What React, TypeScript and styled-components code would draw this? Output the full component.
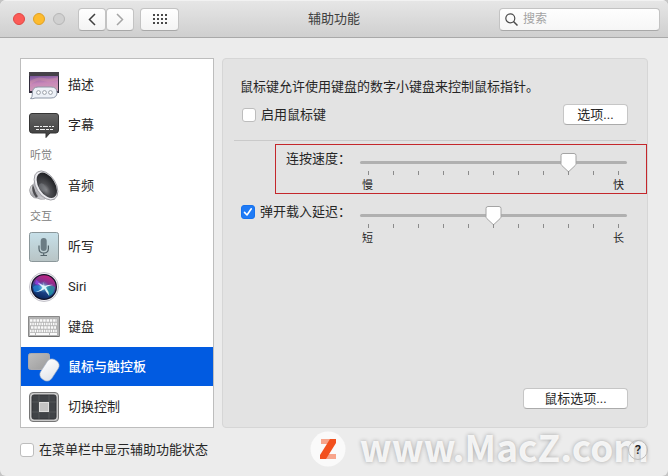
import React, { useState } from "react";
import styled, { createGlobalStyle, css } from "styled-components";

const GlobalStyle = createGlobalStyle`
  *, *::before, *::after { box-sizing: border-box; }
  body {
    margin: 0;
    background: #c4c4c4;
    color: #262626;
    font: 13px/20px Roboto, "Noto Sans CJK SC", sans-serif;
  }
  button, input { font: inherit; color: inherit; }
  svg { display: block; flex: none; }
`;

const Window = styled.div`
  position: relative;
  display: flex;
  flex-direction: column;
  min-height: 100vh;
  border-radius: 6px;
  overflow: hidden;
  background: #ececec;
`;

const TitleBar = styled.header`
  display: grid;
  grid-template-columns: 1fr auto 1fr;
  align-items: center;
  height: 38px;
  padding: 0 8px;
  border-top: 1px solid #f2f2f2;
  border-bottom: 1px solid #a9a9a9;
  background: linear-gradient(#e6e6e6, #cfcfcf);
`;

const Controls = styled.div`
  display: flex;
  align-items: center;
`;

const Lights = styled.div`
  display: flex;
  gap: 8px;
  margin: 0 13px 0 5px;
`;

const Light = styled.button<{ $fill: string; $edge: string }>`
  width: 12px;
  height: 12px;
  padding: 0;
  border: 1px solid ${(p) => p.$edge};
  border-radius: 50%;
  background: ${(p) => p.$fill};
`;

const ToolButton = styled.button<{ $wide?: boolean }>`
  display: flex;
  align-items: center;
  justify-content: center;
  width: ${(p) => (p.$wide ? 39 : 28)}px;
  height: 23px;
  padding: 0;
  border: 1px solid #c3c3c3;
  border-bottom-color: #a8a8a8;
  border-radius: 4px;
  background: linear-gradient(#fefefe, #f4f4f4);
  margin-left: ${(p) => (p.$wide ? 6 : 0)}px;
`;

const Title = styled.h1`
  margin: 0;
  font-size: 13px;
  font-weight: 400;
  color: #404040;
`;

const SearchBox = styled.label`
  justify-self: end;
  display: flex;
  align-items: center;
  gap: 5px;
  width: 161px;
  height: 23px;
  padding: 0 5px;
  border: 1px solid #c3c3c3;
  border-bottom-color: #a8a8a8;
  border-radius: 4px;
  background: linear-gradient(#fefefe, #f6f6f6);
`;

const SearchInput = styled.input`
  flex: 1;
  min-width: 0;
  height: 20px;
  padding: 0;
  border: 0;
  outline: 0;
  background: none;
  font-size: 12px;
  &::placeholder { color: #a3a3a3; opacity: 1; }
`;

const Body = styled.main`
  flex: 1;
  display: grid;
  grid-template-columns: 194px minmax(0, 1fr);
  gap: 8px;
  padding: 20px 20px 0;
`;

const Sidebar = styled.nav`
  padding-top: 6px;
  border: 1px solid #bdbdbd;
  background: #fff;
`;

const SideItem = styled.button<{ $selected?: boolean }>`
  display: flex;
  align-items: center;
  gap: 8px;
  width: 100%;
  height: 39px;
  margin-bottom: 1px;
  padding: 0 7px;
  border: 0;
  background: none;
  text-align: left;
  ${(p) =>
    p.$selected &&
    css`
      background: #015be1;
      color: #fff;
      font-weight: 500;
    `}
`;

const SideHeading = styled.h2`
  height: 21px;
  margin: 0;
  padding-left: 9px;
  font-size: 11px;
  font-weight: 400;
  line-height: 22px;
  color: #808080;
`;

const Panel = styled.section`
  display: flex;
  flex-direction: column;
  border: 1px solid #d6d6d6;
  border-radius: 4px;
  background: #e3e3e3;
`;

const Intro = styled.p`
  margin: 0;
  padding: 18px 17px 0;
`;

const EnableRow = styled.div`
  display: flex;
  align-items: center;
  justify-content: space-between;
  padding: 7px 19px 15px;
`;

const CheckLabel = styled.label`
  display: flex;
  align-items: center;
  gap: 5px;
`;

const Check = styled.input.attrs({ type: "checkbox" })`
  appearance: none;
  flex: none;
  width: 14px;
  height: 14px;
  margin: 0;
  border: 1px solid #bdbdbd;
  border-radius: 3px;
  background: #fff;
  &:checked {
    border-color: #1672ee;
    background: #1f7bf6
      url("data:image/svg+xml,%3Csvg xmlns='http://www.w3.org/2000/svg' viewBox='0 0 12 12'%3E%3Cpath d='M2.5 6.4 5 9 9.3 2.8' fill='none' stroke='white' stroke-width='1.6' stroke-linecap='round' stroke-linejoin='round'/%3E%3C/svg%3E")
      center / 12px 12px no-repeat;
  }
`;

const PushButton = styled.button<{ $wide?: boolean }>`
  width: ${(p) => (p.$wide ? 105 : 65)}px;
  height: 21px;
  padding: 0;
  border: 1px solid #c6c6c6;
  border-bottom-color: #ababab;
  border-radius: 4px;
  background: #fff;
  line-height: 18px;
`;

const Divider = styled.hr`
  width: auto;
  height: 1px;
  margin: 0 11px 3px;
  border: 0;
  background: #cacaca;
`;

const SettingRow = styled.div<{ $marked?: boolean }>`
  display: grid;
  grid-template-columns: auto minmax(0, 1fr);
  column-gap: 9px;
  height: 50px;
  margin-bottom: 3px;
  margin-left: ${(p) => (p.$marked ? 52 : 17)}px;
  padding: 4px 19px 0 ${(p) => (p.$marked ? 10 : 0)}px;
  border: 1px solid ${(p) => (p.$marked ? "#c4272b" : "transparent")};
`;

const SettingLabel = styled.label`
  display: flex;
  align-items: center;
  gap: 5px;
  height: 20px;
`;

const SliderBox = styled.div`
  display: flex;
  flex-direction: column;
  padding-top: 3px;
`;

const thumb = css`
  appearance: none;
  width: 17px;
  height: 20px;
  margin-top: -8px;
  border: 0;
  background: url("data:image/svg+xml,%3Csvg xmlns='http://www.w3.org/2000/svg' viewBox='0 0 17 20'%3E%3Cpath d='M3 .5h11q2 0 2 2v8.2q0 1-.8 1.8L8.5 18.8 1.8 12.500q-.8-.8-.8-1.800V2.500q0-2 2-2Z' fill='white' stroke='%23a4a4a4'/%3E%3C/svg%3E")
    center / 17px 20px no-repeat;
`;

const Range = styled.input.attrs({ type: "range", min: 0, max: 10 })`
  appearance: none;
  display: block;
  width: 100%;
  height: 20px;
  margin: 0;
  background: none;
  &::-webkit-slider-runnable-track {
    height: 3px;
    border-radius: 2px;
    background: #b0b0b0;
  }
  &::-webkit-slider-thumb { ${thumb} }
`;

const Ticks = styled.div`
  display: flex;
  justify-content: space-between;
  height: 4px;
  margin-top: -1px;
  padding: 0 8px;
`;

const Tick = styled.i`
  width: 1px;
  background: #8b8b8b;
`;

const Ends = styled.div`
  display: flex;
  justify-content: space-between;
  padding: 0 3px 0 2px;
  font-size: 11px;
  line-height: 22px;
`;

const PanelFooter = styled.div`
  display: flex;
  justify-content: flex-end;
  margin-top: auto;
  padding: 0 19px 18px;
`;

const Footer = styled.footer`
  display: flex;
  align-items: center;
  justify-content: space-between;
  height: 48px;
  padding: 0 20px 4px;
`;

const HelpButton = styled.button`
  z-index: 1;
  width: 20px;
  height: 20px;
  padding: 0;
  border: 1px solid #bcbcbc;
  border-radius: 50%;
  background: none;
  font-weight: 500;
  line-height: 18px;
`;

const Watermark = styled.div`
  position: absolute;
  right: 19px;
  bottom: 4px;
  display: flex;
  align-items: center;
  gap: 14px;
  pointer-events: none;
  color: rgba(252, 252, 252, 0.9);
  font: 700 37px/40px "Noto Sans CJK SC", sans-serif;
  text-shadow: 0 0 4px rgba(0, 0, 0, 0.3);
`;

const WatermarkText = styled.span`
  padding-bottom: 6px;
`;

const DescriptionIcon = () => (
  <svg width="32" height="32" viewBox="0 0 32 32">
    <defs>
      <linearGradient id="desk" x1="0" y1="0" x2="0.2" y2="1">
        <stop offset="0" stopColor="#76549a" />
        <stop offset="0.55" stopColor="#c887b9" />
        <stop offset="1" stopColor="#cf9bb4" />
      </linearGradient>
    </defs>
    <path d="M1 3h30v21H1z" fill="#302c3b" />
    <path d="M1 3h30v4H1z" fill="#454148" />
    <path d="M2 7h28v15H2z" fill="url(#desk)" />
    <path d="M2 12q8-5 14-3t14-1v3q-9 3-15 1T2 16z" fill="#e7a4a5" opacity=".3" />
    <path d="M10 18h13q6 0 6 5.500T23 29H7q-2 1-4.500.6Q4.500 28 4.300 25 4 18 10 18Z" fill="#edf1f7" stroke="#8e97a6" />
    <g fill="#fff" stroke="#858b95" strokeWidth=".8">
      <circle cx="10.500" cy="23.500" r="1.900" />
      <circle cx="16.500" cy="23.500" r="1.900" />
      <circle cx="22.500" cy="23.500" r="1.900" />
    </g>
  </svg>
);

const CaptionIcon = () => (
  <svg width="32" height="32" viewBox="0 0 32 32">
    <defs>
      <linearGradient id="cap" x1="0" y1="0" x2="0" y2="1">
        <stop offset="0" stopColor="#666" />
        <stop offset="1" stopColor="#3b3b3b" />
      </linearGradient>
    </defs>
    <path d="M4 4.500h24q2.500 0 2.500 2.500v14q0 3-2.500 3h-6l-4 4.500V24H4q-2.500 0-2.500-3V7q0-2.500 2.500-2.500Z" fill="url(#cap)" stroke="#353535" />
    <path d="M6 17.500h20" stroke="#eee" strokeDasharray="5 1 2 1" />
    <path d="M8 20.500h17" stroke="#eee" strokeDasharray="3 1 5 1" />
  </svg>
);

const SpeakerIcon = () => (
  <svg width="32" height="34" viewBox="0 0 32 34">
    <defs>
      <linearGradient id="spk" x1="0" y1="0" x2="1" y2="1">
        <stop offset="0" stopColor="#fafafa" />
        <stop offset="0.5" stopColor="#a1a1a6" />
        <stop offset="1" stopColor="#e6e6ea" />
      </linearGradient>
      <radialGradient id="cone" cx=".3" cy=".6" r=".7">
        <stop offset="0" stopColor="#8d8e92" />
        <stop offset=".35" stopColor="#4d4e52" />
        <stop offset="1" stopColor="#1f2023" />
      </radialGradient>
    </defs>
    <path d="M3 17q3-3 7-2l7 15q-5 1-8-1-3 1-6-3-3-5 0-9Z" fill="url(#spk)" stroke="#929297" strokeWidth=".7" />
    <path d="M6 16q-2 6 3 12" fill="none" stroke="#4c4c50" strokeWidth="2.500" />
    <path d="M9 3 5 16q3 10 12 14l10 1Z" fill="#b8b8bd" />
    <ellipse cx="18" cy="16.500" rx="9.800" ry="16" transform="rotate(-32 18 16.500)" fill="#e9e9ed" stroke="#939398" strokeWidth=".8" />
    <ellipse cx="18.800" cy="16.300" rx="8.200" ry="14" transform="rotate(-32 18.800 16.300)" fill="url(#cone)" />
    <ellipse cx="14.500" cy="18.500" rx="3" ry="4.500" transform="rotate(-32 14.500 18.500)" fill="#77797e" opacity=".65" />
  </svg>
);

const DictationIcon = () => (
  <svg width="32" height="32" viewBox="0 0 32 32">
    <defs>
      <linearGradient id="dict" x1="0" y1="0" x2="0" y2="1">
        <stop offset="0" stopColor="#c7e0e9" />
        <stop offset="1" stopColor="#b8c4c5" />
      </linearGradient>
    </defs>
    <rect x="1.500" y="1.500" width="29" height="29" rx="2" fill="url(#dict)" stroke="#8b979a" />
    <rect x="12.700" y="7" width="6" height="13" rx="3" fill="#6b7c84" />
    <path d="M11 14.500v3q0 4.500 4.700 4.500t4.700-4.500v-3M15.700 22v2.500M12.500 24.500h6.500" fill="none" stroke="#53636a" strokeWidth="1.200" />
  </svg>
);

const SiriIcon = () => (
  <svg width="32" height="32" viewBox="0 0 32 32">
    <defs>
      <linearGradient id="siri" x1=".7" y1="0" x2=".35" y2="1">
        <stop offset="0" stopColor="#c9217f" />
        <stop offset=".38" stopColor="#793393" />
        <stop offset=".6" stopColor="#234c96" />
        <stop offset="1" stopColor="#08265a" />
      </linearGradient>
      <radialGradient id="glow">
        <stop offset="0" stopColor="#fff" />
        <stop offset=".35" stopColor="#8ff0f2" stopOpacity=".6" />
        <stop offset="1" stopColor="#3bd" stopOpacity="0" />
      </radialGradient>
    </defs>
    <circle cx="16" cy="16" r="14.500" fill="#f2f1f5" stroke="#b5b4bc" strokeWidth=".8" />
    <circle cx="16" cy="16" r="13" fill="#111126" />
    <circle cx="16" cy="16" r="11.800" fill="url(#siri)" />
    <path d="M5 16q4-4 11 0-7 8-10 4Z" fill="#2688d9" opacity=".7" />
    <path d="M16 16q7-3 11 0-1 7-6 9Z" fill="#23a4a6" opacity=".7" />
    <path d="M16 16Q10 9 8 9l-1 4Z" fill="#8b3dd6" />
    <circle cx="15.500" cy="16" r="6" fill="url(#glow)" opacity=".8" />
    <path d="M16.500 6q-1 7 0 9Q22 13 26 14q-6 .5-8 2.500 3 4 3 8-3-3-4.500-6.500-5 3.500-8.500 3 5-2 6.500-4.500l-5-5 6 3Z" fill="#e9fcff" opacity=".9" />
  </svg>
);

const keys = [
  [3, "M3 9.500h27"],
  [2, "M3 13h27"],
  [3, "M4 16.500h25"],
  [2, "M3 20h27"],
] as const;

const KeyboardIcon = () => (
  <svg width="34" height="32" viewBox="0 0 34 32">
    <path d="M1.500 5.500h31v20h-31z" fill="#b4b4b4" stroke="#898989" />
    <path d="M2 25.500h30" stroke="#6d6d6d" />
    {keys.map(([dash, d]) => (
      <path key={d} d={d} stroke="#fafafa" strokeWidth="2.300" strokeDasharray={`${dash - 0.5} .8`} />
    ))}
    <path d="M3 23h5M9 23h13M23 23h7" stroke="#fafafa" strokeWidth="1.800" />
  </svg>
);

const MouseIcon = () => (
  <svg width="34" height="34" viewBox="0 0 34 34">
    <defs>
      <linearGradient id="pad" x1="0" y1="0" x2="1" y2="1">
        <stop offset="0" stopColor="#bdbdbd" />
        <stop offset="1" stopColor="#9c9c9c" />
      </linearGradient>
      <linearGradient id="mouse" x1="0" y1="0" x2="1" y2="1">
        <stop offset="0" stopColor="#fff" />
        <stop offset="1" stopColor="#dfe2e7" />
      </linearGradient>
    </defs>
    <rect x="1.500" y="3.500" width="21" height="16" rx="2" fill="url(#pad)" stroke="#aaaaae" />
    <rect x="16" y="8.500" width="13" height="23" rx="5.500" transform="rotate(33 22.500 20)" fill="url(#mouse)" stroke="#a8b4c7" strokeWidth=".6" />
  </svg>
);

const SwitchIcon = () => (
  <svg width="32" height="32" viewBox="0 0 32 32">
    <rect x="1.500" y="1.500" width="29" height="29" rx="3.500" fill="#c9c9c9" stroke="#757575" />
    <rect x="4" y="4" width="24" height="24" rx="2" fill="#404347" stroke="#303236" />
    <path d="M11 4v24M21 4v24M4 11h24M4 21h24" stroke="#606367" strokeWidth=".6" />
    <rect x="11.500" y="11.500" width="9" height="9" fill="#c4c4c4" stroke="#dedede" />
  </svg>
);

const Slot = styled.span`
  display: flex;
  justify-content: center;
  width: 32px;
`;

type Entry = { label: string; icon?: () => React.ReactElement };

const entries: Entry[] = [
  { label: "描述", icon: DescriptionIcon },
  { label: "字幕", icon: CaptionIcon },
  { label: "听觉" },
  { label: "音频", icon: SpeakerIcon },
  { label: "交互" },
  { label: "听写", icon: DictationIcon },
  { label: "Siri", icon: SiriIcon },
  { label: "键盘", icon: KeyboardIcon },
  { label: "鼠标与触控板", icon: MouseIcon },
  { label: "切换控制", icon: SwitchIcon },
];

type SliderProps = { label: string; initial: number; low: string; high: string; id?: string };

function Slider({ id, label, initial, low, high }: SliderProps) {
  const [value, setValue] = useState(initial);
  return (
    <SliderBox>
      <Range id={id} aria-label={label} value={value} onChange={(e) => setValue(Number(e.target.value))} />
      <Ticks>
        {Array.from({ length: 11 }, (_, i) => (
          <Tick key={i} />
        ))}
      </Ticks>
      <Ends>
        <span>{low}</span>
        <span>{high}</span>
      </Ends>
    </SliderBox>
  );
}

export default function App() {
  const [selected, setSelected] = useState("鼠标与触控板");
  return (
    <Window>
      <GlobalStyle />
      <TitleBar>
        <Controls>
          <Lights>
            <Light $fill="#fc5b57" $edge="#df4744" aria-label="关闭" />
            <Light $fill="#fdbb2e" $edge="#dfa023" aria-label="最小化" />
            <Light $fill="#d0d0d0" $edge="#b6b6b6" aria-label="缩放" disabled />
          </Lights>
          <ToolButton aria-label="后退">
            <svg width="8" height="13" viewBox="0 0 8 13">
              <path d="M7 1 1.500 6.500 7 12" fill="none" stroke="#404040" strokeWidth="1.500" />
            </svg>
          </ToolButton>
          <ToolButton aria-label="前进">
            <svg width="8" height="13" viewBox="0 0 8 13">
              <path d="M1 1l5.500 5.500L1 12" fill="none" stroke="#a5a5a5" strokeWidth="1.500" />
            </svg>
          </ToolButton>
          <ToolButton $wide aria-label="显示全部">
            <svg width="14" height="10" viewBox="0 0 14 10" fill="#484848">
              {[0, 4, 8].map((y) => [0, 4, 8, 12].map((x) => <rect key={`${x}-${y}`} x={x} y={y} width="2" height="2" />))}
            </svg>
          </ToolButton>
        </Controls>
        <Title>辅助功能</Title>
        <SearchBox>
          <svg width="13" height="13" viewBox="0 0 13 13">
            <circle cx="5.300" cy="5.300" r="4.500" fill="none" stroke="#4a4a4a" strokeWidth="1.200" />
            <path d="m8.500 8.500 4 4" stroke="#4a4a4a" strokeWidth="1.500" />
          </svg>
          <SearchInput placeholder="搜索" aria-label="搜索" />
        </SearchBox>
      </TitleBar>
      <Body>
        <Sidebar>
          {entries.map(({ label, icon: Icon }) =>
            Icon ? (
              <SideItem key={label} $selected={label === selected} onClick={() => setSelected(label)}>
                <Slot>
                  <Icon />
                </Slot>
                {label}
              </SideItem>
            ) : (
              <SideHeading key={label}>{label}</SideHeading>
            )
          )}
        </Sidebar>
        <Panel>
          <Intro>鼠标键允许使用键盘的数字小键盘来控制鼠标指针。</Intro>
          <EnableRow>
            <CheckLabel>
              <Check />
              启用鼠标键
            </CheckLabel>
            <PushButton>选项...</PushButton>
          </EnableRow>
          <Divider />
          <SettingRow $marked>
            <SettingLabel htmlFor="click-speed">连按速度：</SettingLabel>
            <Slider id="click-speed" label="连按速度" initial={8} low="慢" high="快" />
          </SettingRow>
          <SettingRow>
            <SettingLabel>
              <Check defaultChecked />
              弹开载入延迟：
            </SettingLabel>
            <Slider label="弹开载入延迟" initial={5} low="短" high="长" />
          </SettingRow>
          <PanelFooter>
            <PushButton $wide>鼠标选项...</PushButton>
          </PanelFooter>
        </Panel>
      </Body>
      <Footer>
        <CheckLabel>
          <Check />
          在菜单栏中显示辅助功能状态
        </CheckLabel>
        <HelpButton aria-label="帮助">?</HelpButton>
      </Footer>
      <Watermark>
        <svg width="36" height="36" viewBox="0 0 36 36">
          <circle cx="18" cy="18" r="17.500" fill="#fafafa" />
          <path d="M11 8h14v5H11z" fill="#f7a58c" />
          <path d="M11 23h15v5H11z" fill="#f7a58c" />
          <path d="M20 8h6v4L16 28h-6v-4Z" fill="#f2501e" />
        </svg>
        <WatermarkText>www.MacZ.com</WatermarkText>
      </Watermark>
    </Window>
  );
}
